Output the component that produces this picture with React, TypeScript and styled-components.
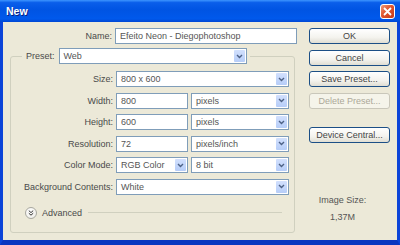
import styled, { createGlobalStyle } from "styled-components";

const GlobalStyle = createGlobalStyle`
  html, body {
    margin: 0;
    padding: 0;
    width: 400px;
    height: 245px;
    overflow: hidden;
    background: #0d47dc;
  }
  * {
    box-sizing: border-box;
  }
`;

const StyledWindow = styled.div`
  width: 400px;
  height: 245px;
  display: flex;
  flex-direction: column;
  font-family: "Liberation Sans", Arial, sans-serif;
  font-size: 9px;
  color: #4a4a4a;
`;

const StyledTitleBar = styled.div`
  height: 22px;
  flex: none;
  display: flex;
  align-items: center;
  justify-content: space-between;
  padding: 0 5px 0 6px;
  background: linear-gradient(
    to bottom,
    #3d95ff 0%,
    #0a5eea 12%,
    #0054e3 45%,
    #0059ec 85%,
    #0047d4 100%
  );
`;

const StyledTitleText = styled.span`
  color: #fff;
  font-weight: bold;
  font-size: 10.5px;
  text-shadow: 1px 1px 0 #0a1e7c;
`;

const StyledCloseButton = styled.span`
  width: 15px;
  height: 15px;
  display: flex;
  align-items: center;
  justify-content: center;
  border: 1px solid #fff;
  border-radius: 3px;
  background: linear-gradient(135deg, #f09a79 0%, #e0552e 45%, #c4391a 100%);
`;

const StyledBody = styled.div`
  flex: 1;
  display: flex;
  gap: 12px;
  padding: 6px 7px 0 7px;
  background: #ece9d8;
  border-left: 3px solid #0b44d8;
  border-right: 3px solid #0b44d8;
  border-bottom: 5px solid #0936c0;
`;

const StyledLeftColumn = styled.div`
  width: 287px;
  display: flex;
  flex-direction: column;
`;

const StyledNameRow = styled.div`
  display: grid;
  grid-template-columns: 102px 182px;
  column-gap: 3px;
  align-items: center;
`;

const StyledLabel = styled.span`
  text-align: right;
  white-space: nowrap;
  color: #4a4a4a;
`;

const StyledTextBox = styled.div`
  height: 16px;
  display: flex;
  align-items: center;
  padding: 0 4px;
  background: #fff;
  border: 1px solid #7f9db9;
  color: #555;
  white-space: nowrap;
  overflow: hidden;
`;

const StyledSelect = styled.div<{ $span?: boolean }>`
  height: 16px;
  display: flex;
  align-items: center;
  justify-content: space-between;
  padding: 0 1px 0 4px;
  background: #fff;
  border: 1px solid #7f9db9;
  color: #555;
  white-space: nowrap;
  grid-column: ${(p) => (p.$span ? "2 / span 2" : "auto")};
`;

const StyledArrow = styled.span`
  width: 11px;
  height: 12px;
  display: flex;
  align-items: center;
  justify-content: center;
  border-radius: 1px;
  background: linear-gradient(to bottom, #d2e0fd 0%, #b6cdf8 100%);
`;

const StyledGroupBox = styled.fieldset`
  width: 285px;
  min-width: 0;
  margin: 4px 0 0 0;
  padding: 7px 0 13px 0;
  border: 1px solid #d0d0bf;
  border-radius: 3px;
`;

const StyledLegend = styled.legend`
  margin-left: 11px;
  padding: 0 3px 0 4px;
  display: flex;
  align-items: center;
  gap: 4px;
`;

const StyledPresetSelect = styled(StyledSelect)`
  width: 188px;
`;

const StyledFieldGrid = styled.div`
  display: grid;
  grid-template-columns: 102px 72px 98px;
  column-gap: 3px;
  row-gap: 5.5px;
  align-items: center;
`;

const StyledAdvancedRow = styled.div`
  height: 12px;
  margin-top: 12px;
  padding: 0 12px 0 14px;
  display: flex;
  align-items: center;
  gap: 5px;
`;

const StyledChevronCircle = styled.span`
  width: 12px;
  height: 12px;
  flex: none;
  display: flex;
  align-items: center;
  justify-content: center;
  border: 1px solid #a8a8a0;
  border-radius: 50%;
  background: radial-gradient(circle at 40% 35%, #ffffff 0%, #ecebe4 100%);
`;

const StyledRule = styled.span`
  flex: 1;
  height: 1px;
  margin-left: 1px;
  background: #d0d0bf;
`;

const StyledRightColumn = styled.div`
  width: 81px;
  display: flex;
  flex-direction: column;
  gap: 5.5px;
`;

const StyledButton = styled.div<{ $disabled?: boolean; $gapBefore?: boolean }>`
  height: 16px;
  display: flex;
  align-items: center;
  justify-content: center;
  border: 1px solid ${(p) => (p.$disabled ? "#c9c7ba" : "#1c4f86")};
  border-radius: 3px;
  background: ${(p) =>
    p.$disabled
      ? "#f5f4ea"
      : "linear-gradient(to bottom, #ffffff 0%, #f4f3ee 60%, #e0ded3 100%)"};
  color: ${(p) => (p.$disabled ? "#aca899" : "#444")};
  white-space: nowrap;
  margin-top: ${(p) => (p.$gapBefore ? "13px" : "0")};
`;

const StyledImageSize = styled.div`
  margin-top: 45px;
  padding-right: 14px;
  display: flex;
  flex-direction: column;
  align-items: center;
  gap: 5px;
  color: #555;
  line-height: 12px;
`;

function Arrow() {
  return (
    <StyledArrow>
      <svg width="7" height="5" viewBox="0 0 7 5">
        <path d="M1 1 L3.5 3.5 L6 1" fill="none" stroke="#4d6185" strokeWidth="1.4" />
      </svg>
    </StyledArrow>
  );
}

function Select({ value, span }: { value: string; span?: boolean }) {
  return (
    <StyledSelect $span={span}>
      <span>{value}</span>
      <Arrow />
    </StyledSelect>
  );
}

export default function App() {
  return (
    <>
      <GlobalStyle />
      <StyledWindow>
        <StyledTitleBar>
          <StyledTitleText>New</StyledTitleText>
          <StyledCloseButton>
            <svg width="9" height="9" viewBox="0 0 9 9">
              <path d="M1 1 L8 8 M8 1 L1 8" stroke="#fff" strokeWidth="1.8" />
            </svg>
          </StyledCloseButton>
        </StyledTitleBar>
        <StyledBody>
          <StyledLeftColumn>
            <StyledNameRow>
              <StyledLabel>Name:</StyledLabel>
              <StyledTextBox>Efeito Neon - Diegophotoshop</StyledTextBox>
            </StyledNameRow>
            <StyledGroupBox>
              <StyledLegend>
                <StyledLabel>Preset:</StyledLabel>
                <StyledPresetSelect>
                  <span>Web</span>
                  <Arrow />
                </StyledPresetSelect>
              </StyledLegend>
              <StyledFieldGrid>
                <StyledLabel>Size:</StyledLabel>
                <Select value="800 x 600" span />
                <StyledLabel>Width:</StyledLabel>
                <StyledTextBox>800</StyledTextBox>
                <Select value="pixels" />
                <StyledLabel>Height:</StyledLabel>
                <StyledTextBox>600</StyledTextBox>
                <Select value="pixels" />
                <StyledLabel>Resolution:</StyledLabel>
                <StyledTextBox>72</StyledTextBox>
                <Select value="pixels/inch" />
                <StyledLabel>Color Mode:</StyledLabel>
                <Select value="RGB Color" />
                <Select value="8 bit" />
                <StyledLabel>Background Contents:</StyledLabel>
                <Select value="White" span />
              </StyledFieldGrid>
              <StyledAdvancedRow>
                <StyledChevronCircle>
                  <svg width="6" height="6" viewBox="0 0 6 6">
                    <path
                      d="M0.8 0.6 L3 2.6 L5.2 0.6 M0.8 3.2 L3 5.2 L5.2 3.2"
                      fill="none"
                      stroke="#333"
                      strokeWidth="1"
                    />
                  </svg>
                </StyledChevronCircle>
                <span>Advanced</span>
                <StyledRule />
              </StyledAdvancedRow>
            </StyledGroupBox>
          </StyledLeftColumn>
          <StyledRightColumn>
            <StyledButton>OK</StyledButton>
            <StyledButton>Cancel</StyledButton>
            <StyledButton>Save Preset...</StyledButton>
            <StyledButton $disabled>Delete Preset...</StyledButton>
            <StyledButton $gapBefore>Device Central...</StyledButton>
            <StyledImageSize>
              <span>Image Size:</span>
              <span>1,37M</span>
            </StyledImageSize>
          </StyledRightColumn>
        </StyledBody>
      </StyledWindow>
    </>
  );
}
